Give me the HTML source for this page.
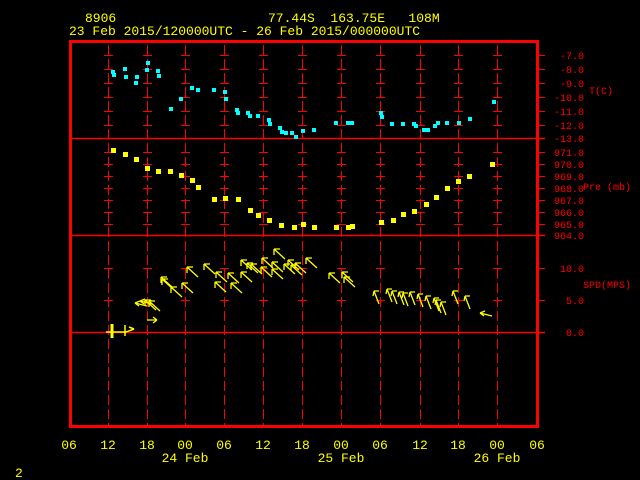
<!DOCTYPE html>
<html><head><meta charset="utf-8"><style>
html,body{margin:0;padding:0;background:#000;width:640px;height:480px;overflow:hidden}
svg{display:block}
text{font-family:"Liberation Mono",monospace;white-space:pre}
.y{fill:#ffff00;font-size:13px}
.r{fill:#ff0000;font-size:10px}
</style></head><body>
<svg width="640" height="480" viewBox="0 0 640 480" xmlns="http://www.w3.org/2000/svg" xml:space="preserve">
<defs>
<g id="a" stroke="#ffff00" stroke-width="1.3" fill="none"><path d="M0 0L11 10M0 0h6M0 0v6"/></g>
<g id="b" stroke="#ffff00" stroke-width="1.3" fill="none"><path d="M0 0L5 13M0 0h5M0 0l-1 5"/></g>
<g id="c" stroke="#ffff00" stroke-width="1.3" fill="none"><path d="M0 0L12 3M0 0l5 -2M0 0l4 3"/></g>
</defs>
<text class="y" x="85" y="22">8906</text>
<text class="y" x="268" y="22">77.44S  163.75E   108M</text>
<text class="y" x="69" y="35">23 Feb 2015/120000UTC - 26 Feb 2015/000000UTC</text>

<g stroke="#ff0000" stroke-width="1" stroke-dasharray="10,4">
<path d="M108.5 45V428M147.5 45V428M185.5 45V428M224.5 45V428M263.5 45V428M302.5 45V428M341.5 45V428M380.5 45V428M420.5 45V428M458.5 45V428M497.5 45V428"/>
</g>
<g stroke="#ff0000" stroke-width="1">
<path id="tk" d="M104 55.5h9M104 69.5h9M104 83.5h9M104 97.5h9M104 111.5h9M104 125.5h9M104 152.5h9M104 164.5h9M104 176.5h9M104 188.5h9M104 200.5h9M104 212.5h9M104 224.5h9M104 268.5h9M104 300.5h9"/>
<use href="#tk" x="39"/><use href="#tk" x="77"/><use href="#tk" x="116"/><use href="#tk" x="155"/><use href="#tk" x="194"/><use href="#tk" x="233"/><use href="#tk" x="272"/><use href="#tk" x="312"/><use href="#tk" x="350"/><use href="#tk" x="389"/>
<path d="M536 55.5h9M536 69.5h9M536 83.5h9M536 97.5h9M536 111.5h9M536 125.5h9M536 152.5h9M536 164.5h9M536 176.5h9M536 188.5h9M536 200.5h9M536 212.5h9M536 224.5h9M536 268.5h9M536 300.5h9"/>
</g>
<g stroke="#ff0000" stroke-width="1.5">
<path d="M70 138.5H545M70 235.5H545M70 332.5H545"/>
</g>
<rect x="70.5" y="41.5" width="467" height="385" fill="none" stroke="#ff0000" stroke-width="3"/>

<g class="r" text-anchor="end">
<text x="584" y="59">-7.0</text><text x="584" y="73">-8.0</text><text x="584" y="87">-9.0</text><text x="584" y="101">-10.0</text><text x="584" y="115">-11.0</text><text x="584" y="129">-12.0</text><text x="584" y="142">-13.0</text>
<text x="584" y="156">971.0</text><text x="584" y="168">970.0</text><text x="584" y="180">969.0</text><text x="584" y="192">968.0</text><text x="584" y="204">967.0</text><text x="584" y="216">966.0</text><text x="584" y="228">965.0</text><text x="584" y="239">964.0</text>
<text x="584" y="272">10.0</text><text x="584" y="304">5.0</text><text x="584" y="336">0.0</text>
</g>
<text class="r" x="589" y="94">T(C)</text>
<text class="r" x="583" y="190">Pre (mb)</text>
<text class="r" x="583" y="288">SPD(MPS)</text>

<g fill="#00ffff">
<path d="M111 70h4v4h-4zM112 73h4v4h-4zM123 67h4v4h-4zM124 75h4v4h-4zM135 75h4v4h-4zM134 81h4v4h-4zM146 61h4v4h-4zM145 68h4v4h-4zM156 69h4v4h-4zM157 74h4v4h-4zM169 107h4v4h-4zM179 97h4v4h-4zM190 86h4v4h-4zM196 88h4v4h-4zM212 88h4v4h-4zM223 90h4v4h-4zM224 97h4v4h-4zM235 108h4v4h-4zM236 111h4v4h-4zM246 111h4v4h-4zM248 114h4v4h-4zM256 114h4v4h-4zM267 118h4v4h-4zM268 122h4v4h-4zM278 126h4v4h-4zM280 130h4v4h-4zM284 131h4v4h-4zM290 131h4v4h-4zM294 135h4v4h-4zM301 129h4v4h-4zM312 128h4v4h-4zM334 121h4v4h-4zM346 121h4v4h-4zM350 121h4v4h-4zM379 111h4v4h-4zM380 115h4v4h-4zM390 122h4v4h-4zM401 122h4v4h-4zM412 122h4v4h-4zM414 124h4v4h-4zM422 128h4v4h-4zM426 128h4v4h-4zM433 124h4v4h-4zM436 121h4v4h-4zM445 121h4v4h-4zM457 121h4v4h-4zM468 117h4v4h-4zM492 100h4v4h-4z"/>
</g>
<g fill="#ffff00">
<path d="M111 148h5v5h-5zM123 152h5v5h-5zM134 157h5v5h-5zM145 166h5v5h-5zM156 169h5v5h-5zM168 169h5v5h-5zM179 173h5v5h-5zM190 178h5v5h-5zM196 185h5v5h-5zM212 197h5v5h-5zM223 196h5v5h-5zM236 197h5v5h-5zM248 208h5v5h-5zM256 213h5v5h-5zM267 218h5v5h-5zM279 223h5v5h-5zM292 225h5v5h-5zM301 222h5v5h-5zM312 225h5v5h-5zM334 225h5v5h-5zM346 225h5v5h-5zM350 224h5v5h-5zM379 220h5v5h-5zM391 218h5v5h-5zM401 212h5v5h-5zM412 209h5v5h-5zM424 202h5v5h-5zM434 195h5v5h-5zM445 186h5v5h-5zM456 179h5v5h-5zM467 174h5v5h-5zM490 162h5v5h-5z"/>
</g>
<use href="#a" x="161" y="277"/><use href="#a" x="171" y="287"/><use href="#a" x="182" y="283"/><use href="#a" x="187" y="267"/><use href="#a" x="204" y="264"/><use href="#a" x="216" y="272"/><use href="#a" x="215" y="282"/><use href="#a" x="228" y="273"/><use href="#a" x="231" y="283"/><use href="#a" x="241" y="272"/><use href="#a" x="241" y="260"/><use href="#a" x="247" y="263"/><use href="#a" x="251" y="264"/><use href="#a" x="262" y="258"/><use href="#a" x="261" y="267"/><use href="#a" x="272" y="262"/><use href="#a" x="272" y="269"/><use href="#a" x="274" y="249"/><use href="#a" x="284" y="264"/><use href="#a" x="288" y="260"/><use href="#a" x="291" y="265"/><use href="#a" x="295" y="263"/><use href="#a" x="306" y="258"/>
<use href="#a" x="329" y="273"/><use href="#a" x="342" y="272"/><use href="#a" x="344" y="277"/><use href="#a" x="162" y="279"/>
<use href="#b" x="374" y="291"/><use href="#b" x="387" y="289"/><use href="#b" x="392" y="291"/><use href="#b" x="399" y="292"/><use href="#b" x="403" y="293"/><use href="#b" x="410" y="292"/><use href="#b" x="418" y="294"/><use href="#b" x="426" y="296"/><use href="#b" x="434" y="298"/><use href="#b" x="436" y="300"/><use href="#b" x="441" y="302"/><use href="#b" x="453" y="291"/><use href="#b" x="465" y="296"/>
<use href="#c" x="480" y="313"/>
<use href="#c" x="135" y="303"/><use href="#c" x="140" y="301"/><use href="#a" x="145" y="300"/><use href="#a" x="149" y="301"/>
<path d="M147 320h10M157 320l-4 -3M157 320l-4 3" stroke="#ffff00" stroke-width="1.3" fill="none"/>
<path d="M106 332h20M112 325v12M125 325v11M126 332l8 -3M129 327l5 2" stroke="#ffff00" stroke-width="1.5" fill="none"/>
<path d="M112 324v14" stroke="#ffff00" stroke-width="3"/>

<g class="y" text-anchor="middle">
<text x="69" y="449">06</text><text x="108" y="449">12</text><text x="147" y="449">18</text><text x="185" y="449">00</text><text x="224" y="449">06</text><text x="263" y="449">12</text><text x="302" y="449">18</text><text x="341" y="449">00</text><text x="380" y="449">06</text><text x="420" y="449">12</text><text x="458" y="449">18</text><text x="497" y="449">00</text><text x="537" y="449">06</text>
<text x="185" y="462">24 Feb</text><text x="341" y="462">25 Feb</text><text x="497" y="462">26 Feb</text>
</g>
<text class="y" x="15" y="477">2</text>
</svg>
</body></html>
